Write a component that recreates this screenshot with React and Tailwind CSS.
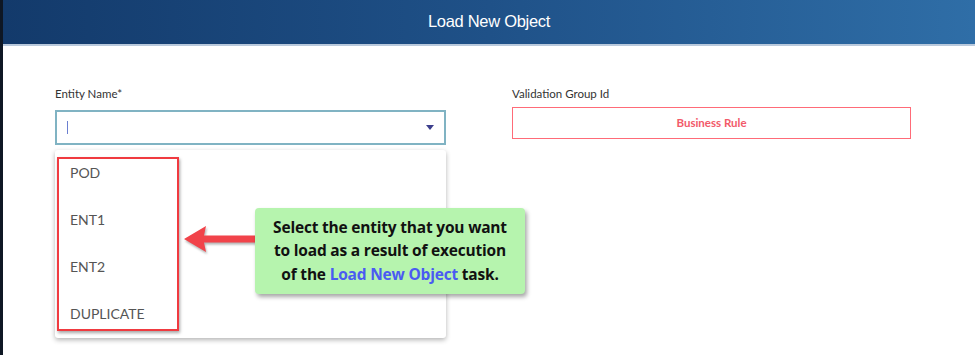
import React from 'react'

const items = ['POD', 'ENT1', 'ENT2', 'DUPLICATE']

const Arrow = () => (
  <svg width="74" height="30" viewBox="0 0 74 30" className="absolute left-[179px] top-[224px] drop-shadow-[1px_2px_1px_rgba(0,0,0,0.3)]">
    <path d="M2 15 L24 2 L22 11.5 L74 11.5 L74 18.5 L22 18.5 L24 28 Z" fill="#f1434a" />
  </svg>
)

const App = () => {
  return (
    <div className="w-[975px] h-[355px] flex bg-white overflow-hidden font-['Lato','Open_Sans',sans-serif]">
      <div className="w-[3px] bg-[#0e1724]" />
      <div className="flex-1 flex flex-col relative">
        <div className="h-[46px] flex items-center justify-center bg-gradient-to-r from-[#133a6b] via-[#1f5188] to-[#2f6ea7] border-b-2 border-[#b9c9dc]">
          <span className="text-white text-[16.5px] tracking-[-0.3px] font-['Liberation_Sans_Narrow','Liberation_Sans',sans-serif] mt-[-1px]">
            Load New Object
          </span>
        </div>

        <div className="flex pl-[52px] pt-[40px] gap-[66px]">
          <div className="w-[391px] flex flex-col">
            <label className="text-[11.5px] text-[#333] leading-[16px]">Entity Name*</label>
            <div className="mt-[8px] h-[35px] border-2 border-[#80b3c3] flex items-center justify-between px-[10px]">
              <span className="w-[1px] h-[13px] bg-[#6b7fd0]" />
              <span className="w-0 h-0 border-l-[4px] border-r-[4px] border-t-[5px] border-l-transparent border-r-transparent border-t-[#3c3f8c]" />
            </div>
          </div>
          <div className="w-[399px] flex flex-col">
            <label className="text-[11.5px] text-[#333] leading-[16px]">Validation Group Id</label>
            <div className="mt-[5px] h-[32px] border border-[#ff6b78] flex items-center justify-center">
              <span className="text-[11.5px] font-bold text-[#f25a6a]">Business Rule</span>
            </div>
          </div>
        </div>

        <div className="absolute left-[52px] top-[150px] w-[391px] h-[188px] bg-white rounded-[3px] shadow-[0_2px_5px_rgba(0,0,0,0.3)]">
          <div className="ml-[2px] mt-[7px] w-[122px] h-[174px] border-2 border-[#f03a40] shadow-[1px_2px_3px_rgba(0,0,0,0.35)] flex flex-col justify-between pl-[11px] pt-[3px] pb-[4px]">
            {items.map((it) => (
              <div key={it} className="text-[14px] text-[#555] leading-[22px]">{it}</div>
            ))}
          </div>
        </div>

        <Arrow />

        <div className="absolute left-[252px] top-[208px] w-[270px] h-[86px] bg-[#b6f4ae] rounded-[4px] shadow-[2px_3px_4px_rgba(0,0,0,0.35)] flex flex-col items-center justify-center font-['Open_Sans',sans-serif] font-bold text-[15.5px] leading-[23.5px] tracking-[-0.2px] text-[#111]">
          <div>Select the entity that you want</div>
          <div>to load as a result of execution</div>
          <div>
            of the <span className="text-[#4a5bf2]">Load New Object</span> task.
          </div>
        </div>
      </div>
    </div>
  )
}

export default App
